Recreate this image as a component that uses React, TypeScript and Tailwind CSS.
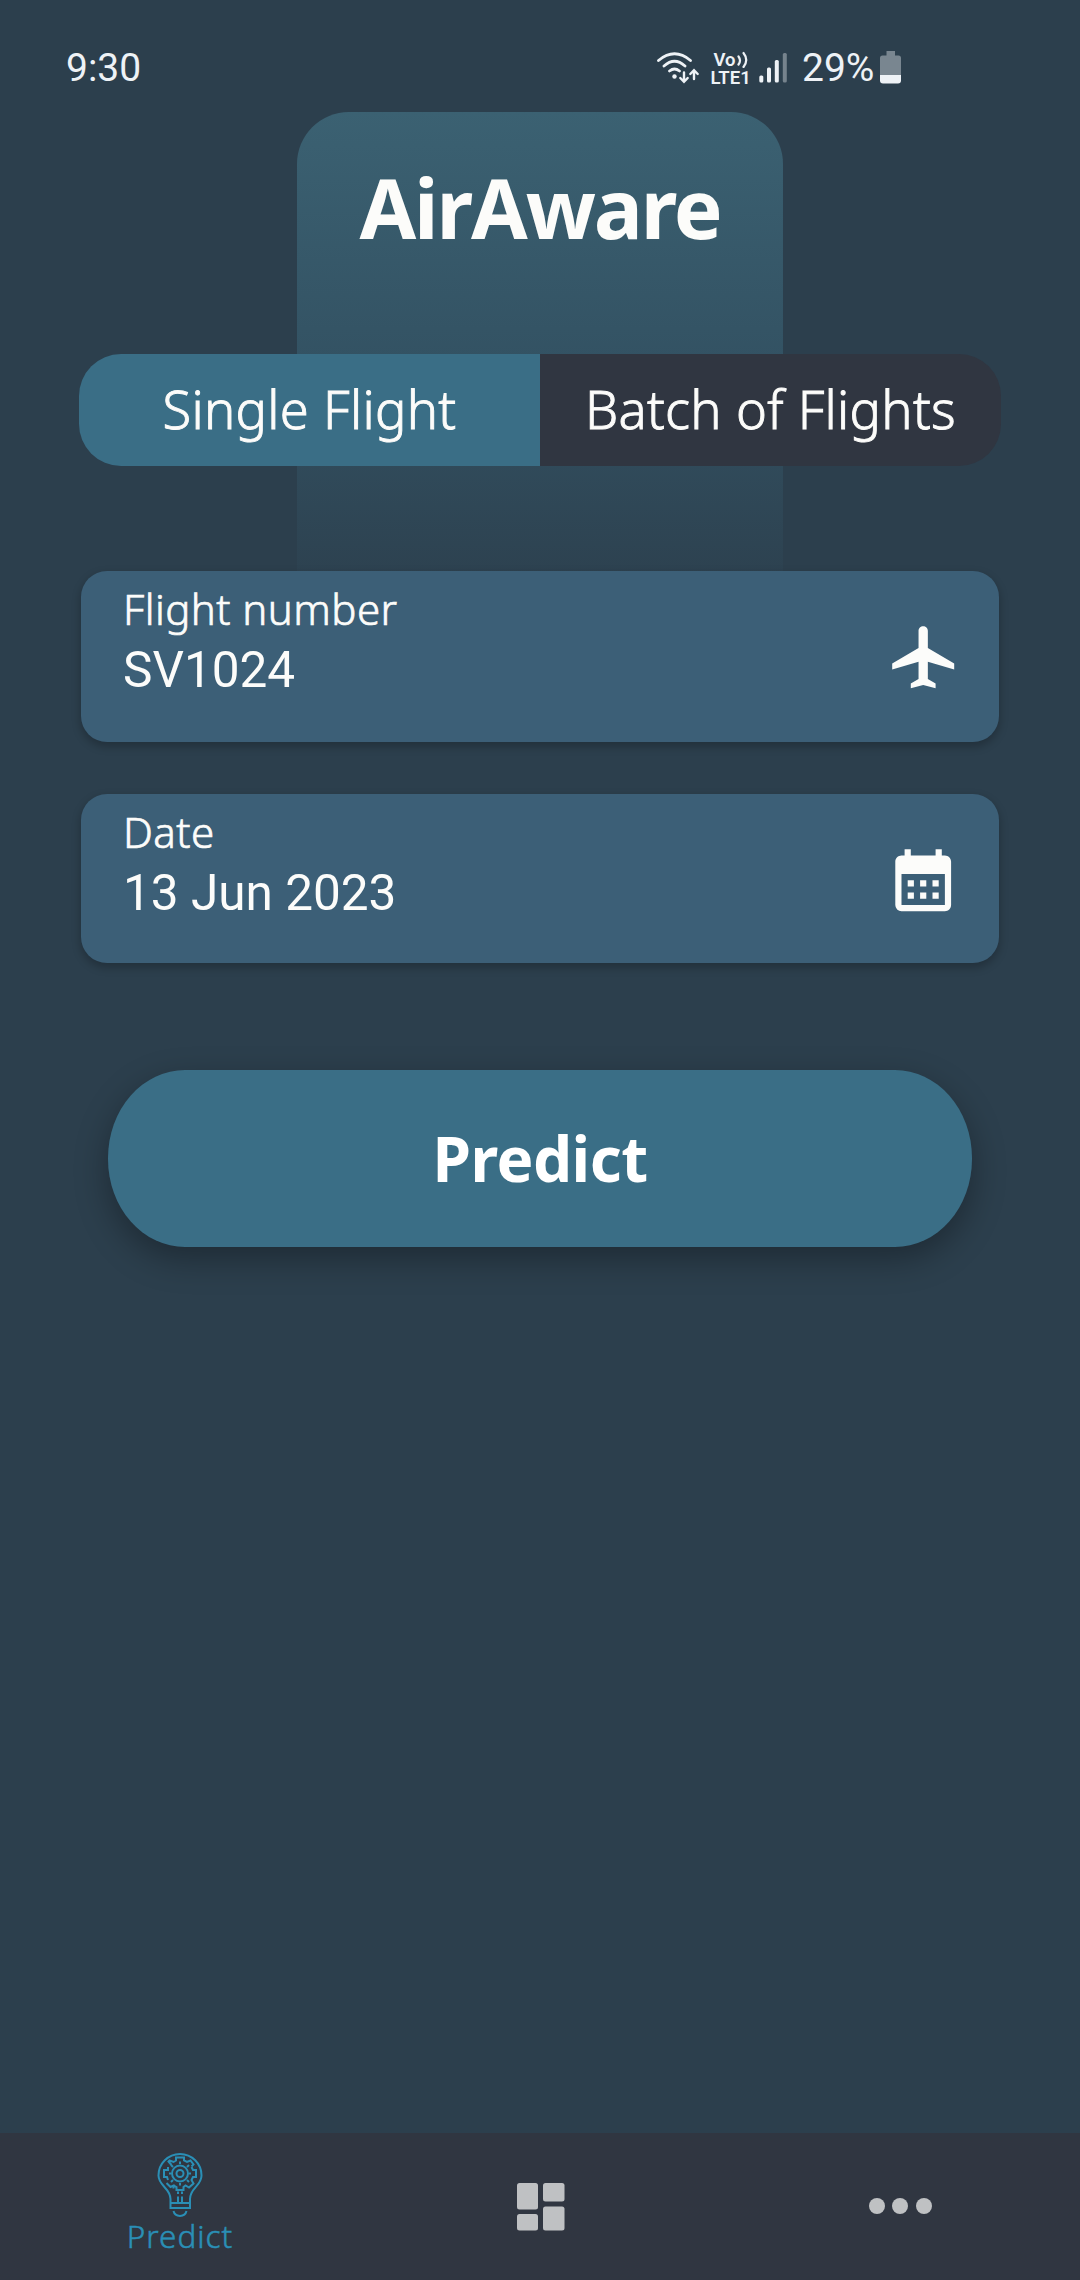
import type { ReactNode } from "react";

function StatusBar() {
  return (
    <header className="flex h-28 items-start justify-between pl-[66px] pr-[178px] pt-[49px] font-[Roboto,sans-serif] text-[39px] leading-[39px] text-[#eef2f6]">
      <span>9:30</span>
      <div className="flex items-start">
        <svg className="mt-[3px] h-8 w-[44px]" viewBox="657 52 44 32" fill="none" stroke="currentColor" strokeWidth="2.8" strokeLinecap="round">
          <path d="M658.5 60.5Q674.500 47 690.500 60.500M664 66Q674.500 56.500 685 66M669.500 71Q674.500 67 679.500 71" />
          <circle cx="674.500" cy="76.500" r="2.200" fill="currentColor" stroke="none" />
          <path strokeWidth="2.400" d="M684 72.500V81.500M680.300 78L684 81.800L687.700 78M694 79V70.500M690.300 74L694 70.200L697.700 74" />
        </svg>
        <div className="ml-[9.500px] mt-[2px] flex w-[40px] flex-col text-[18.500px] font-semibold leading-[18px]">
          <span className="flex items-start pl-[3px]">
            Vo
            <svg className="-mt-px ml-px h-[18px] w-3" viewBox="0 0 12 18" fill="none" stroke="currentColor" strokeWidth="2.200" strokeLinecap="round">
              <path d="M1.500 6.500Q4.500 10.500 1.500 14.500M6.500 3Q12 10 6.500 17" />
            </svg>
          </span>
          <span className="leading-[18px]">LTE1</span>
        </div>
        <svg className="mt-[3px] ml-[8px] h-8 w-7" viewBox="759 52 28 32" fill="currentColor">
          <rect x="759.300" y="75.500" width="4" height="7" rx="1.500" />
          <rect x="767" y="67.500" width="4" height="15" rx="1.500" />
          <rect x="774.800" y="60" width="4" height="22.500" rx="1.500" />
          <rect x="782.800" y="53" width="4" height="29.500" rx="1.500" opacity=".38" />
        </svg>
        <span className="ml-[15.500px] w-[78px]">29%</span>
        <svg className="mt-[2px] h-[33px] w-[22px]" viewBox="0 0 22 33" fill="currentColor">
          <path opacity=".4" d="M6.500 0h8.500v4.500h3.500a2.500 2.500 0 0 1 2.500 2.500V24H0V7a2.500 2.500 0 0 1 2.500-2.500h4z" />
          <path d="M0 24h21v5.500a3 3 0 0 1-3 3H3a3 3 0 0 1-3-3z" />
        </svg>
      </div>
    </header>
  );
}

function Field({ label, value, icon, className }: { label: string; value: string; icon: ReactNode; className: string }) {
  return (
    <section className={`flex justify-between rounded-[26px] bg-[#3c5f77] pl-[42px] pr-[39px] shadow-[0_4px_9px_1px_rgba(0,0,0,0.22)] ${className}`}>
      <div className="flex flex-col pt-[14px]">
        <span className="text-[42px] font-light leading-[48px] tracking-[0.450px] [-webkit-text-stroke:0.7px_currentColor]">{label}</span>
        <span className="mt-[8px] font-[Roboto,sans-serif] text-[49.500px] leading-[58px]">{value}</span>
      </div>
      <svg className="mt-[49px] size-[74.400px] shrink-0" viewBox="0 0 24 24" fill="currentColor">{icon}</svg>
    </section>
  );
}

function BulbIcon() {
  return (
    <svg className="-ml-px h-16 w-[46px]" viewBox="0 0 46 64" fill="none" stroke="currentColor" strokeWidth="2">
      <path d="M13.500 49V46C13.500 35 1.500 33 1.500 22.500a21.500 21.500 0 0 1 43 0C44.500 33 33 35 33 46v3" />
      <path d="M13.500 50h19.500v5H13.500zM16.500 58c1.500 6.500 11.500 6.500 13 0" />
      <path d="M16.500 35.500v-3l-3 1.500-4-4M11 27l-1-3H7v-7h4V14M14.500 12l-3-3.500 1-1 4 1.500 2.500-1.500V4.500h8v3l3 1.500 3.500-1.500 3 4-2 2M34.500 14l1.500 3h3v7h-3l-1.500 3 2 3.500-4.500 4-3.500-2-2 1.500V37h-7v-3l-3-1.500" />
      <circle cx="23" cy="20.500" r="8" />
      <circle cx="23" cy="20.500" r="3.500" />
      <path d="M21 50V43.500M25 50V43.500M21 41v-2.500M25 41v-2.500M23 11V8.500M12 20.500h2M32 20.500h2M14 12l2 2M32 12l-2 2M14 29l2-2M32 29l-2-2M23 30v2.500" />
    </svg>
  );
}

function TabBar() {
  return (
    <nav className="mt-auto grid h-[147px] grid-cols-3 bg-[#303641]">
      <div className="flex flex-col items-center pt-5 text-[#2a8fb6]">
        <BulbIcon />
        <span className="-mt-px text-[31.500px] font-light leading-10 tracking-[1px] [-webkit-text-stroke:0.5px_currentColor]">Predict</span>
      </div>
      <div className="flex items-start justify-center pl-[2px] pt-[50px] text-[#bfc1c3]">
        <svg className="h-12 w-12" viewBox="0 0 48 48" fill="currentColor">
          <rect width="21" height="26.500" rx="2.500" />
          <rect y="31" width="21" height="16.500" rx="2.500" />
          <rect x="26" width="21.500" height="18.500" rx="2.500" />
          <rect x="26" y="23.500" width="21.500" height="24" rx="2.500" />
        </svg>
      </div>
      <div className="flex items-start justify-center gap-[7.500px] pt-[65px]">
        <i className="size-4 rounded-full bg-[#bfc1c3]" />
        <i className="size-4 rounded-full bg-[#bfc1c3]" />
        <i className="size-4 rounded-full bg-[#bfc1c3]" />
      </div>
    </nav>
  );
}

export default function App() {
  return (
    <div className="relative isolate flex h-[2280px] w-[1080px] flex-col bg-[#2c3f4d] font-['Noto_Sans',sans-serif] text-[#fcfcfa]">
      <div className="absolute left-[297px] top-28 -z-10 h-[500px] w-[486px] rounded-t-[52px] bg-linear-to-b from-[#3b6172] via-[#335263] to-[#2c3f4d]" />
      <StatusBar />
      <h1 className="mt-[39px] text-center text-[82px] font-bold leading-[112px] tracking-[-2.100px]">AirAware</h1>
      <div className="mx-[79px] mt-[91px] grid h-28 grid-cols-2 overflow-hidden rounded-[42px] text-center text-[52.500px] font-light leading-[109px] tracking-[0.300px] [-webkit-text-stroke:0.9px_currentColor]">
        <button className="bg-[#3a6e86] pb-[3px]">Single Flight</button>
        <button className="bg-[#303641] pb-[3px]">Batch of Flights</button>
      </div>
      <main className="flex flex-col px-[81px] pt-[105px]">
        <Field
          label="Flight number"
          value="SV1024"
          className="h-[171px]"
          icon={<path d="M22 16v-2l-8.500-5V3.500c0-.83-.67-1.500-1.500-1.500s-1.500.67-1.500 1.500V9L2 14v2l8.500-2.500V19L8 20.500V22l4-1 4 1v-1.500L13.500 19v-5.500L22 16z" />}
        />
        <Field
          label="Date"
          value="13 Jun 2023"
          className="mt-[52px] h-[169px]"
          icon={<path d="M19 4h-1V2h-2v2H8V2H6v2H5c-1.110 0-2 .9-2 2v14a2 2 0 0 0 2 2h14c1.100 0 2-.9 2-2V6c0-1.100-.9-2-2-2zm0 16H5V10h14v10zM9 14H7v-2h2v2zm4 0h-2v-2h2v2zm4 0h-2v-2h2v2zm-8 4H7v-2h2v2zm4 0h-2v-2h2v2zm4 0h-2v-2h2v2z" />}
        />
        <button className="mx-[27px] mt-[107px] h-[177px] rounded-[77px/88px] bg-[#3a6e86] text-[62px] font-bold leading-[177px] tracking-[-0.500px] text-white shadow-[0_12px_34px_rgba(0,0,0,0.32)]">
          Predict
        </button>
      </main>
      <TabBar />
    </div>
  );
}
